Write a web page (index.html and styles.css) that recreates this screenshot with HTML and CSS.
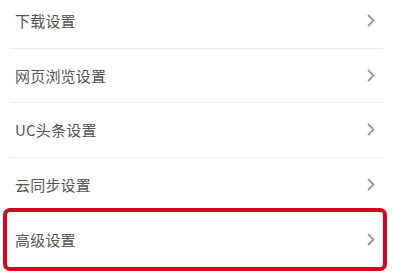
FILE: index.html
```html
<!DOCTYPE html>
<html lang="zh-CN">
<head>
<meta charset="utf-8">
<title>设置</title>
<link rel="stylesheet" href="styles.css">
</head>
<body>
<div class="list">
  <div class="row"><span class="label">下载设置</span><svg class="chev" width="8" height="13" viewBox="0 0 8 13"><polyline points="1.5,1.5 6.5,6.5 1.5,11.5" /></svg></div>
  <div class="row"><span class="label">网页浏览设置</span><svg class="chev" width="8" height="13" viewBox="0 0 8 13"><polyline points="1.5,1.5 6.5,6.5 1.5,11.5" /></svg></div>
  <div class="row"><span class="label">UC头条设置</span><svg class="chev" width="8" height="13" viewBox="0 0 8 13"><polyline points="1.5,1.5 6.5,6.5 1.5,11.5" /></svg></div>
  <div class="row row-last"><span class="label">云同步设置</span><svg class="chev" width="8" height="13" viewBox="0 0 8 13"><polyline points="1.5,1.5 6.5,6.5 1.5,11.5" /></svg></div>
  <div class="highlight">
    <div class="row row-inner"><span class="label">高级设置</span><svg class="chev" width="8" height="13" viewBox="0 0 8 13"><polyline points="1.5,1.5 6.5,6.5 1.5,11.5" /></svg></div>
  </div>
</div>
</body>
</html>
```

FILE: styles.css
```css
html, body {
  margin: 0;
  padding: 0;
  background: #ffffff;
}

html {
  min-height: 100%;
}

body {
  min-height: 274px;
  font-family: "Noto Sans CJK SC", "Noto Sans", sans-serif;
  color: #555555;
}

.list {
  margin-top: -6px;
  display: flex;
  flex-direction: column;
}

.row {
  box-sizing: border-box;
  height: 54.5px;
  margin: 0 10px;
  padding: 0 8px 0 5px;
  display: flex;
  align-items: center;
  justify-content: space-between;
  border-bottom: 1px solid #ededed;
}

.label {
  font-size: 15px;
  letter-spacing: 0.2px;
  line-height: 1;
}

.chev {
  display: block;
  fill: none;
  stroke: #9a9a9a;
  stroke-width: 1.8;
  stroke-linecap: round;
  stroke-linejoin: round;
}

.highlight {
  margin: -4px 6px 0 3px;
  border: 4px solid #d9001b;
  border-radius: 7px;
  position: relative;
}

.row-inner {
  margin: 0;
  padding: 0 8px 0 8px;
  border-bottom: none;
}
```
